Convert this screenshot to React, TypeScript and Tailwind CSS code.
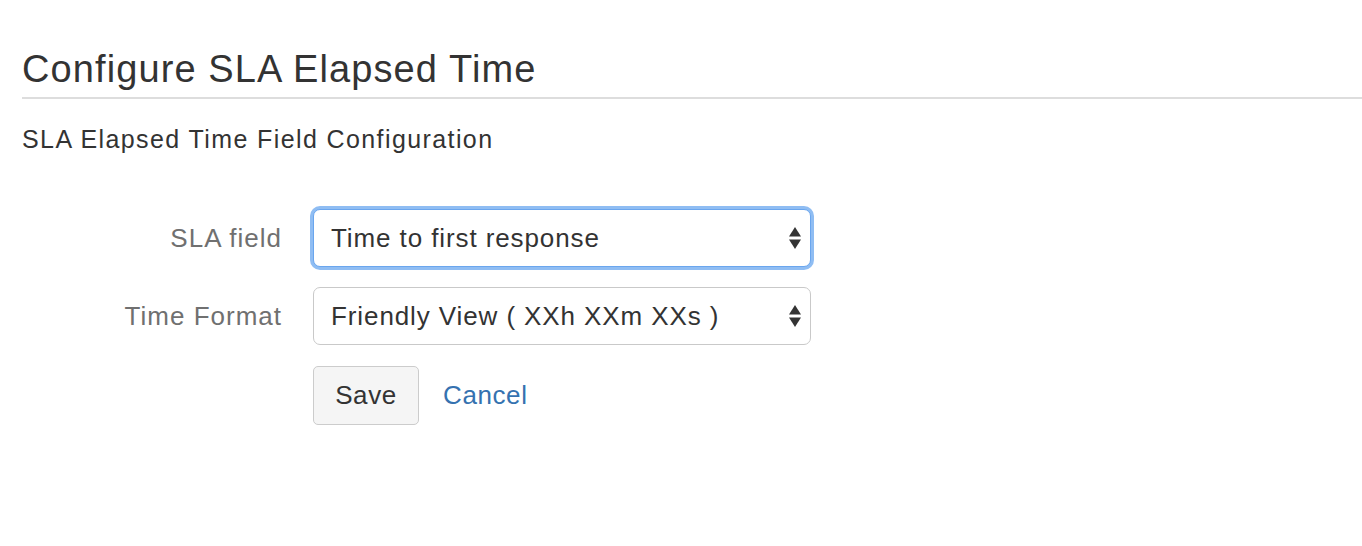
import * as React from "react"

interface FieldRowProps {
  label: string
  value: string
  options: string[]
  focused?: boolean
}

function SelectArrows() {
  return (
    <svg
      className="pointer-events-none absolute right-[10px] top-1/2 -translate-y-1/2"
      width="12"
      height="24"
      viewBox="0 0 12 24"
      fill="#333333"
    >
      <path d="M6 1 L12 10.5 L0 10.5 Z" />
      <path d="M0 13.5 L12 13.5 L6 23 Z" />
    </svg>
  )
}

function FieldRow({ label, value, options, focused }: FieldRowProps) {
  return (
    <>
      <label className="flex h-[58px] items-center justify-end text-[26px] tracking-[1px] text-[#707070]">
        {label}
      </label>
      <div className="relative h-[58px] w-[498px]">
        <select
          defaultValue={value}
          className={
            focused
              ? "h-full w-full appearance-none rounded-[7px] border border-[#6aa6ee] bg-white pl-[17px] pr-10 text-[26px] tracking-[0.9px] text-[#333333] shadow-[0_0_0_3px_#8fbdf3] outline-none"
              : "h-full w-full appearance-none rounded-[7px] border border-[#c9c9c9] bg-white pl-[17px] pr-10 text-[26px] tracking-[0.9px] text-[#333333] outline-none"
          }
        >
          {options.map((o) => (
            <option key={o} value={o}>
              {o}
            </option>
          ))}
        </select>
        <SelectArrows />
      </div>
    </>
  )
}

export default function App() {
  return (
    <div className="min-h-[546px] bg-white pl-[22px] [font-family:'Liberation_Sans',Arial,sans-serif] text-[#333333]">
      <h1 className="border-b-2 border-[#dddddd] pb-[9px] pt-[50px] text-[38px] font-normal leading-[38px] tracking-[1.1px]">
        Configure SLA Elapsed Time
      </h1>

      <h2 className="mt-[25px] text-[25px] font-normal leading-[30px] tracking-[1.4px]">
        SLA Elapsed Time Field Configuration
      </h2>

      <form className="mt-[55px] grid grid-cols-[260px_498px] gap-x-[31px] gap-y-[20px]">
        <FieldRow
          label="SLA field"
          value="Time to first response"
          options={["Time to first response", "Time to resolution"]}
          focused
        />
        <FieldRow
          label="Time Format"
          value="Friendly View ( XXh XXm XXs )"
          options={["Friendly View ( XXh XXm XXs )", "Hours ( XX.XX )"]}
        />
        <div />
        <div className="mt-[1px] flex items-center gap-[24px]">
          <button
            type="button"
            className="h-[59px] w-[106px] rounded-[5px] border border-[#cccccc] bg-[#f5f5f5] text-[26px] tracking-[0.6px] text-[#333333]"
          >
            Save
          </button>
          <a href="#" className="text-[26px] tracking-[0.6px] text-[#3572b0]">
            Cancel
          </a>
        </div>
      </form>
    </div>
  )
}
